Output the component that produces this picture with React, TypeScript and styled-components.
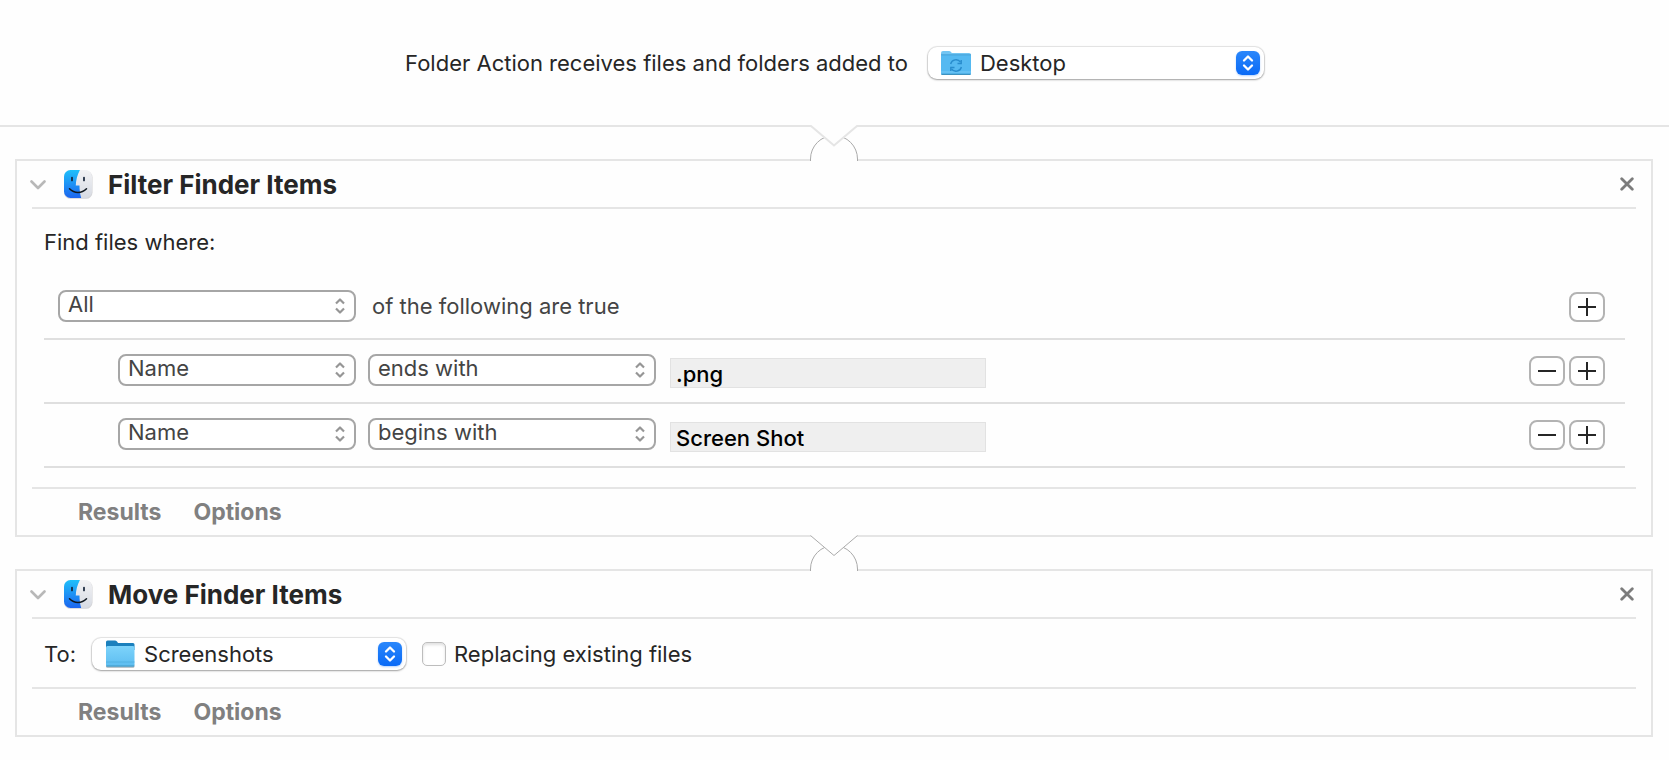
import React, { useId } from 'react';
import styled, { createGlobalStyle } from 'styled-components';

const GlobalStyle = createGlobalStyle`
  * { box-sizing: border-box; }
  body {
    margin: 0;
    background: #fefefe;
    color: #262626;
    font: 400 22px/28px Inter, "Liberation Sans", sans-serif;
  }
  button, input, select { font: inherit; margin: 0; }
`;

const line = '#e5e5e5';

const Page = styled.main`
  display: flex;
  flex-direction: column;
  padding-bottom: 23px;
`;

const TriggerBar = styled.header`
  display: flex;
  align-items: center;
  justify-content: center;
  gap: 20px;
  padding: 47px 16px 46px;
  border-bottom: 2px solid ${line};
`;

const Card = styled.section`
  margin: 0 16px 0 15px;
  padding: 0 15px;
  border: 2px solid ${line};
`;

const CardHeader = styled.header`
  display: flex;
  align-items: center;
  height: 48px;
  padding-top: 2px;
  border-bottom: 2px solid ${line};
`;

const IconButton = styled.button`
  display: flex;
  padding: 0;
  border: 0;
  background: none;
`;

const DisclosureButton = styled(IconButton)`
  margin: 0 17px 0 -2px;
`;

const CloseButton = styled(IconButton)`
  margin: 0 2px 2px auto;
`;

const CardTitle = styled.h2`
  margin: 0 0 0 15px;
  font-size: 26px;
  line-height: 32px;
  font-weight: 700;
`;

const CardFooter = styled.footer`
  display: flex;
  align-items: center;
  gap: 32px;
  height: 48px;
  padding: 0 46px;
  border-top: 2px solid ${line};
`;

const FooterButton = styled.button`
  padding: 0;
  border: 0;
  background: none;
  color: #808080;
  font-size: 23px;
  font-weight: 700;
`;

const FilterBody = styled.div`
  padding: 19px 11px 19px 12px;
`;

const Prompt = styled.p`
  margin: 0 0 20px;
`;

const RuleRow = styled.div<{ $nested?: boolean }>`
  display: flex;
  align-items: center;
  height: 64px;
  padding: 0 20px 0 ${p => (p.$nested ? 74 : 14)}px;
  border-bottom: 2px solid #dfdfdf;
  color: #444;
`;

const RuleText = styled.span`
  margin: 0 0 2px 16px;
`;

const RuleActions = styled.div`
  display: flex;
  gap: 4px;
  margin-left: auto;
`;

const RuleButton = styled.button`
  display: grid;
  place-items: center;
  width: 36px;
  height: 30px;
  padding: 0;
  border: 2px solid #b3b3b3;
  border-radius: 8px;
  background: #fff;
`;

const Stack = styled.div<{ $width: number }>`
  display: grid;
  align-items: center;
  width: ${p => p.$width}px;
  > * { grid-area: 1 / 1; }
  > svg { pointer-events: none; }
`;

const RuleStack = styled(Stack)`
  grid-template-rows: 28px;
  margin-bottom: 2px;
  border: 2px solid #a6a6a6;
  border-radius: 8px;
  background: #fff;
  & + & { margin-left: 12px; }
`;

const OutlineSelect = styled.select`
  appearance: none;
  width: 100%;
  height: 28px;
  margin-bottom: 4px;
  padding: 0 32px 0 8px;
  border: 0;
  background: transparent;
  color: #444;
`;

const OutlineArrows = styled.svg`
  justify-self: end;
  margin-right: 9px;
`;

const ValueInput = styled.input`
  width: 316px;
  height: 30px;
  margin: 4px 0 0 14px;
  padding: 2px 5px 0;
  border: 1px solid #e2e2e2;
  background: #efefef;
  color: #000;
  font-weight: 500;
`;

const PopupSelect = styled.select`
  appearance: none;
  width: 100%;
  height: 32px;
  padding: 0 40px 0 52px;
  border: 0;
  border-radius: 9px;
  background: #fff;
  color: #262626;
  box-shadow: 0 0 1px 1px rgba(0, 0, 0, 0.1), 0 1px 2px rgba(0, 0, 0, 0.3);
`;

const PopupIcon = styled.span`
  display: flex;
  margin-left: 13px;
  pointer-events: none;
`;

const PopupBadge = styled.span`
  display: grid;
  place-items: center;
  justify-self: end;
  width: 24px;
  height: 24px;
  margin-right: 4px;
  border-radius: 6px;
  background: linear-gradient(#2a87fb, #0a6af6);
  box-shadow: 0 1px 2px rgba(10, 106, 246, 0.3);
  pointer-events: none;
`;

const MoveBody = styled.div`
  display: flex;
  align-items: center;
  height: 68px;
  padding: 2px 12px 0;
`;

const ToLabel = styled.label`
  margin-right: 16px;
`;

const CheckLabel = styled.label`
  display: flex;
  align-items: center;
  gap: 8px;
  margin-left: 16px;
`;

const Checkbox = styled.input`
  appearance: none;
  width: 24px;
  height: 24px;
  border: 1px solid #bdbdbd;
  border-radius: 5px;
  background: #fff;
  box-shadow: inset 0 2px 3px rgba(0, 0, 0, 0.12);
`;

const Notch = styled.svg`
  position: relative;
  display: block;
  align-self: center;
  margin: -2px 1px -2px 0;
`;

function Connector({ thin }: { thin?: boolean }) {
  return (
    <Notch width="48" height="36" viewBox="0 0 48 36" aria-hidden="true">
      <path d="M1 0H47V3H1Z M1 33H47V36H1Z" fill="#fefefe" />
      <path d="M.5 36V34A23.500 23.500 0 0 1 47.500 34V36" fill="#fefefe" stroke="#aaa" />
      <path d="M0 0H48L24 21Z" fill="#fefefe" />
      {thin ? (
        <path d="M.5 .5L24 20.500L47.500 .5" fill="none" stroke="#aaa" />
      ) : (
        <path d="M0 1H1L24 20.500L47 1H48" fill="none" stroke={line} strokeWidth="2" />
      )}
    </Notch>
  );
}

function FinderIcon() {
  const id = useId();
  return (
    <svg width="30" height="32" viewBox="0 0 30 32" aria-hidden="true">
      <defs>
        <linearGradient id={`${id}b`} x1="0" y1="0" x2="0" y2="1">
          <stop offset="0" stopColor="#1fc3fb" />
          <stop offset="1" stopColor="#1c62ee" />
        </linearGradient>
        <linearGradient id={`${id}g`} x1="0" y1="0" x2="0" y2="1">
          <stop offset="0" stopColor="#f3f3f5" />
          <stop offset="1" stopColor="#d6dae2" />
        </linearGradient>
        <clipPath id={`${id}c`}>
          <rect x="1" y="1" width="28" height="28" rx="6.500" />
        </clipPath>
      </defs>
      <rect x="1" y="1.800" width="28.500" height="28" rx="6.500" fill="#b8b8bc" opacity=".6" />
      <g clipPath={`url(#${id}c)`}>
        <path d="M0 0H30V30H0Z" fill={`url(#${id}g)`} />
        <path d="M0 0H17.500C14.500 5 13 10.500 12.800 16.500H16.500C16.500 21 17 25 18.500 30H0Z" fill={`url(#${id}b)`} />
      </g>
      <path d="M9 8.500V11.500M21 8.500V11.500" stroke="#132238" strokeWidth="1.700" strokeLinecap="round" />
      <path d="M6.500 19.700C11.500 24.600 18.500 24.600 23.500 19.700" fill="none" stroke="#101820" strokeWidth="1.500" strokeLinecap="round" />
    </svg>
  );
}

function DesktopFolderIcon() {
  return (
    <svg width="30" height="24" viewBox="0 0 30 24" aria-hidden="true">
      <path d="M0 2Q0 0 2 0H8Q9.200 0 10 1L10.800 2H28Q30 2 30 4V22Q30 24 28 24H2Q0 24 0 22Z" fill="#72c5f3" />
      <path d="M0 5Q0 4 1 4H29Q30 4 30 5V22Q30 24 28 24H2Q0 24 0 22Z" fill="#55b9f1" />
      <path d="M0 3.800H30" stroke="#3a98cf" strokeWidth=".8" />
      <path d="M0 21H30" stroke="#78c9f5" />
      <path d="M.5 23.400H29.500" stroke="#3e92bf" strokeWidth="1.200" />
      <g fill="none" stroke="#288ccd" strokeWidth="1.400">
        <path d="M9.600 13A5.500 5.500 0 0 1 19.500 11.200M20.400 16A5.500 5.500 0 0 1 10.500 17.800" />
        <path d="M20.200 9V12.500H16.500M9.800 20V16.500H13.500" />
      </g>
    </svg>
  );
}

function FolderIcon() {
  const id = useId();
  return (
    <svg width="30" height="28" viewBox="0 0 30 28" aria-hidden="true">
      <defs>
        <linearGradient id={id} x1="0" y1="0" x2="0" y2="1">
          <stop offset="0" stopColor="#7dd3fb" />
          <stop offset="1" stopColor="#5dbdf0" />
        </linearGradient>
      </defs>
      <rect x="1" y="24" width="28.500" height="3.800" rx="1.500" fill="#a7b3ba" />
      <path d="M1 2Q1 .5 2.500 .5H10Q11 .5 12 1.500L13 3H28Q29.500 3 29.500 4.500V10H1Z" fill="#1b80bd" />
      <path d="M1 7.500Q1 6 2.500 6H28Q29.500 6 29.500 7.500V25Q29.500 26.500 28 26.500H2.500Q1 26.500 1 25Z" fill={`url(#${id})`} />
      <path d="M1 22H29.500" stroke="#4badde" strokeWidth=".8" />
      <path d="M1.500 26H29" stroke="#4398c2" />
    </svg>
  );
}

function BadgeArrows() {
  return (
    <svg width="12" height="18" viewBox="0 0 12 18" aria-hidden="true">
      <path d="M2 6.500L6 2.500L10 6.500M2 11.500L6 15.500L10 11.500" fill="none" stroke="#fff" strokeWidth="2.300" strokeLinecap="round" strokeLinejoin="round" />
    </svg>
  );
}

function RuleSelect({ width, value, label, options }: { width: number; value: string; label: string; options: string[] }) {
  return (
    <RuleStack $width={width}>
      <OutlineSelect aria-label={label} defaultValue={value}>
        {options.map(o => <option key={o}>{o}</option>)}
      </OutlineSelect>
      <OutlineArrows width="10" height="16" viewBox="0 0 10 16" aria-hidden="true">
        <path d="M1 5.500L5 1.500L9 5.500M1 10.500L5 14.500L9 10.500" fill="none" stroke="#969696" strokeWidth="2.200" strokeLinejoin="round" />
      </OutlineArrows>
    </RuleStack>
  );
}

function FolderPopup({ id, width, value, icon }: { id: string; width: number; value: string; icon: React.ReactNode }) {
  return (
    <Stack $width={width}>
      <PopupSelect id={id} defaultValue={value}>
        <option>{value}</option>
      </PopupSelect>
      <PopupIcon>{icon}</PopupIcon>
      <PopupBadge><BadgeArrows /></PopupBadge>
    </Stack>
  );
}

function AddButton() {
  return (
    <RuleButton type="button" aria-label="Add rule">
      <svg width="18" height="18" viewBox="0 0 18 18">
        <path d="M9 0V18M0 9H18" stroke="#262626" strokeWidth="2" />
      </svg>
    </RuleButton>
  );
}

function RemoveButton() {
  return (
    <RuleButton type="button" aria-label="Remove rule">
      <svg width="18" height="18" viewBox="0 0 18 18">
        <path d="M0 9H18" stroke="#262626" strokeWidth="2" />
      </svg>
    </RuleButton>
  );
}

function ActionCard({ title, children }: { title: string; children: React.ReactNode }) {
  return (
    <Card>
      <CardHeader>
        <DisclosureButton type="button" aria-label={`Collapse ${title}`}>
          <svg width="16" height="10" viewBox="0 0 16 10">
            <path d="M1.500 1.500L8 8L14.500 1.500" fill="none" stroke="#b8b8b8" strokeWidth="2.600" strokeLinecap="round" strokeLinejoin="round" />
          </svg>
        </DisclosureButton>
        <FinderIcon />
        <CardTitle>{title}</CardTitle>
        <CloseButton type="button" aria-label={`Remove ${title}`}>
          <svg width="14" height="14" viewBox="0 0 14 14">
            <path d="M1.700 1.700L12.300 12.300M12.300 1.700L1.700 12.300" stroke="#7c7c7c" strokeWidth="2.800" strokeLinecap="round" />
          </svg>
        </CloseButton>
      </CardHeader>
      {children}
      <CardFooter>
        <FooterButton type="button">Results</FooterButton>
        <FooterButton type="button">Options</FooterButton>
      </CardFooter>
    </Card>
  );
}

const rules = [
  { test: 'ends with', value: '.png' },
  { test: 'begins with', value: 'Screen Shot' },
];

export default function App() {
  return (
    <Page>
      <GlobalStyle />
      <TriggerBar>
        <label htmlFor="watched">Folder Action receives files and folders added to</label>
        <FolderPopup id="watched" width={336} value="Desktop" icon={<DesktopFolderIcon />} />
      </TriggerBar>
      <Connector />
      <ActionCard title="Filter Finder Items">
        <FilterBody>
          <Prompt>Find files where:</Prompt>
          <RuleRow>
            <RuleSelect width={298} value="All" label="Match" options={['All', 'Any', 'None']} />
            <RuleText>of the following are true</RuleText>
            <RuleActions><AddButton /></RuleActions>
          </RuleRow>
          {rules.map(rule => (
            <RuleRow key={rule.value} $nested>
              <RuleSelect width={238} value="Name" label="Attribute" options={['Name', 'Kind']} />
              <RuleSelect width={288} value={rule.test} label="Comparison" options={['begins with', 'ends with']} />
              <ValueInput aria-label="Value" defaultValue={rule.value} />
              <RuleActions><RemoveButton /><AddButton /></RuleActions>
            </RuleRow>
          ))}
        </FilterBody>
      </ActionCard>
      <Connector thin />
      <ActionCard title="Move Finder Items">
        <MoveBody>
          <ToLabel htmlFor="destination">To:</ToLabel>
          <FolderPopup id="destination" width={314} value="Screenshots" icon={<FolderIcon />} />
          <CheckLabel>
            <Checkbox type="checkbox" />
            Replacing existing files
          </CheckLabel>
        </MoveBody>
      </ActionCard>
    </Page>
  );
}
